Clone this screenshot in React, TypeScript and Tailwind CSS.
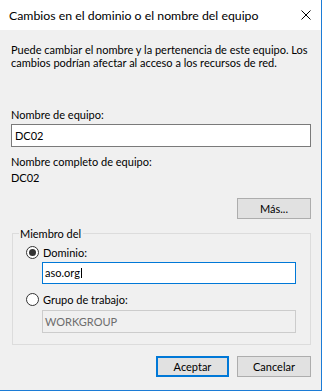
const font = { fontFamily: 'Lato, "Liberation Sans", Arial, sans-serif' }

function Radio({ checked }: { checked?: boolean }) {
  return (
    <span className="flex h-[13px] w-[13px] shrink-0 items-center justify-center rounded-full border border-[#333333] bg-white">
      {checked && <span className="h-[7px] w-[7px] rounded-full bg-[#333333]" />}
    </span>
  )
}

export default function App() {
  return (
    <div
      className="flex h-[391px] w-[322px] flex-col border-r border-b border-[#1c7cd6] bg-[#f0f0f0] text-[11px] leading-[13px] text-black"
      style={font}
    >
      {/* title bar */}
      <div className="flex h-[30px] shrink-0 items-center justify-between bg-white pl-[9px] pr-[10px]">
        <span className="text-[12.3px] leading-[15px]">Cambios en el dominio o el nombre del equipo</span>
        <svg width="10" height="10" viewBox="0 0 10 10">
          <path d="M0.5 0.5 L9.5 9.5 M9.5 0.5 L0.5 9.5" stroke="#000" strokeWidth="1" />
        </svg>
      </div>

      <div className="flex flex-col pl-[11px] pr-[10px]">
        <p className="mt-[13px]">
          Puede cambiar el nombre y la pertenencia de este equipo. Los cambios podrían afectar al acceso a los
          recursos de red.
        </p>

        <div className="mt-[39px]">Nombre de equipo:</div>
        <div className="mt-[3px] flex h-[23px] items-center border border-[#7a7a7a] bg-white pl-[3px]">DC02</div>

        <div className="mt-[8px]">Nombre completo de equipo:</div>
        <div className="mt-[3px]">DC02</div>

        <div className="mt-[14px] flex justify-end">
          <button className="h-[21px] w-[74px] border border-[#adadad] bg-[#e1e1e1]">Más...</button>
        </div>

        <fieldset className="mt-[8px] ml-[1px] border border-[#dcdcdc] pb-[11px] pl-[13px]">
          <legend className="-ml-[7px] pl-[1px] pr-[2px]">Miembro del</legend>
          <label className="mt-[6px] flex items-center gap-[4px]">
            <Radio checked />
            Dominio:
          </label>
          <div className="mt-[3px] ml-[16px] flex h-[22px] w-[254px] items-center border border-[#0078d7] bg-white pb-[1px] pl-[2px]">
            aso.org<span className="ml-[1px] inline-block h-[10px] w-[1px] bg-black" />
          </div>
          <label className="mt-[9px] flex items-center gap-[4px]">
            <Radio />
            Grupo de trabajo:
          </label>
          <div className="mt-[4px] ml-[16px] flex h-[23px] w-[254px] items-center border border-[#cccccc] bg-[#f0f0f0] pl-[2px] text-[#6d6d6d]">
            WORKGROUP
          </div>
        </fieldset>

        <div className="mt-[11px] flex justify-end gap-[8px]">
          <button className="h-[21px] w-[73px] border-2 border-[#0078d7] bg-[#e1e1e1]">Aceptar</button>
          <button className="h-[21px] w-[74px] border border-[#adadad] bg-[#e1e1e1]">Cancelar</button>
        </div>
      </div>
    </div>
  )
}
